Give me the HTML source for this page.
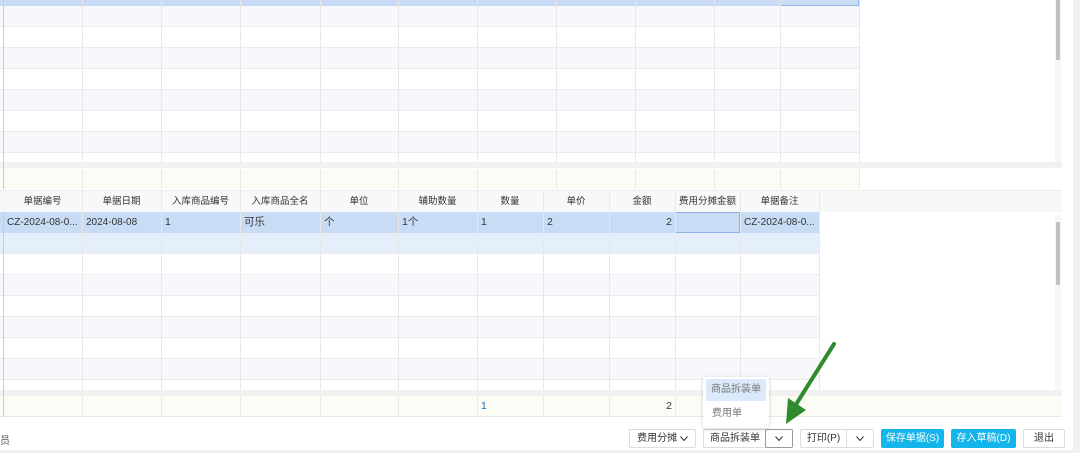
<!DOCTYPE html>
<html><head><meta charset="utf-8"><style>
*{margin:0;padding:0;box-sizing:border-box}
body{width:1080px;height:453px;overflow:hidden;background:#fff;font-family:"Liberation Sans","Noto Sans CJK SC",sans-serif;font-size:10.5px;color:#333;position:relative}
.a{position:absolute}
.row{position:absolute;left:0;height:21px}
.vl{position:absolute;width:1px;background:#e8e8e8}
.c{position:absolute;top:0;height:21px;line-height:21px;white-space:nowrap}
.btn{position:absolute;top:429px;height:19px;border:1px solid #dcdcdc;border-radius:2px;background:#fff;font-size:10px;line-height:17px;text-align:center;color:#333}
.blue{background:#13b5ea;border-color:#13b5ea;color:#fff}
.chev{display:inline-block;width:8px;height:5px;vertical-align:middle}
</style></head><body>
<div class="row" style="top:0;height:6px;width:859px;background:#c9dcf5"></div>
<div class="a" style="left:780px;top:0;width:79px;height:6px;border:1px solid #8fb2e8;border-top:none"></div>
<div class="row" style="top:6px;width:859px;background:#f6f8fc;border-bottom:1px solid #ececec"></div>
<div class="row" style="top:27px;width:859px;background:#fff;border-bottom:1px solid #ececec"></div>
<div class="row" style="top:48px;width:859px;background:#f6f8fc;border-bottom:1px solid #ececec"></div>
<div class="row" style="top:69px;width:859px;background:#fff;border-bottom:1px solid #ececec"></div>
<div class="row" style="top:90px;width:859px;background:#f6f8fc;border-bottom:1px solid #ececec"></div>
<div class="row" style="top:111px;width:859px;background:#fff;border-bottom:1px solid #ececec"></div>
<div class="row" style="top:132px;width:859px;background:#f6f8fc;border-bottom:1px solid #ececec"></div>
<div class="row" style="top:153px;width:859px;height:9px;background:#fff"></div>
<div class="a" style="left:0;top:162px;width:1062px;height:6px;background:#f1f1f1"></div>
<div class="a" style="left:0;top:169px;width:859px;height:20px;background:#fbfcf6"></div>
<div class="a" style="left:1055px;top:0;width:6px;height:162px;background:#f7f7f7"></div>
<div class="a" style="left:1056px;top:0;width:4px;height:60px;background:#c1c1c1"></div>
<div class="a" style="left:1073px;top:0;width:7px;height:453px;background:#eef1f6"></div>
<div class="vl" style="left:3px;top:0;height:189px;background:#ccc"></div>
<div class="vl" style="left:82px;top:0;height:162px"></div><div class="vl" style="left:161px;top:0;height:162px"></div><div class="vl" style="left:240px;top:0;height:162px"></div><div class="vl" style="left:320px;top:0;height:162px"></div><div class="vl" style="left:398px;top:0;height:162px"></div><div class="vl" style="left:477px;top:0;height:162px"></div><div class="vl" style="left:556px;top:0;height:162px"></div><div class="vl" style="left:635px;top:0;height:162px"></div><div class="vl" style="left:714px;top:0;height:162px"></div><div class="vl" style="left:780px;top:0;height:162px"></div><div class="vl" style="left:859px;top:0;height:162px"></div>
<div class="vl" style="left:82px;top:169px;height:20px"></div><div class="vl" style="left:161px;top:169px;height:20px"></div><div class="vl" style="left:240px;top:169px;height:20px"></div><div class="vl" style="left:320px;top:169px;height:20px"></div><div class="vl" style="left:398px;top:169px;height:20px"></div><div class="vl" style="left:477px;top:169px;height:20px"></div><div class="vl" style="left:556px;top:169px;height:20px"></div><div class="vl" style="left:635px;top:169px;height:20px"></div><div class="vl" style="left:714px;top:169px;height:20px"></div><div class="vl" style="left:780px;top:169px;height:20px"></div><div class="vl" style="left:859px;top:169px;height:20px"></div>
<div class="row" style="top:190px;width:1062px;height:22px;background:#f7f8fa;border-top:1px solid #eee;font-size:9.5px">
<div class="c" style="left:3px;width:79px;text-align:center;line-height:22px">单据编号</div>
<div class="c" style="left:82px;width:79px;text-align:center;line-height:22px">单据日期</div>
<div class="c" style="left:161px;width:79px;text-align:center;line-height:22px">入库商品编号</div>
<div class="c" style="left:240px;width:80px;text-align:center;line-height:22px">入库商品全名</div>
<div class="c" style="left:320px;width:78px;text-align:center;line-height:22px">单位</div>
<div class="c" style="left:398px;width:79px;text-align:center;line-height:22px">辅助数量</div>
<div class="c" style="left:477px;width:66px;text-align:center;line-height:22px">数量</div>
<div class="c" style="left:543px;width:66px;text-align:center;line-height:22px">单价</div>
<div class="c" style="left:609px;width:66px;text-align:center;line-height:22px">金额</div>
<div class="c" style="left:675px;width:65px;text-align:center;line-height:22px">费用分摊金额</div>
<div class="c" style="left:740px;width:79px;text-align:center;line-height:22px">单据备注</div>
</div>
<div class="row" style="top:212px;width:819px;background:#c9dcf5">
<div class="c" style="left:7px;font-size:10px">CZ-2024-08-0...</div>
<div class="c" style="left:86px;font-size:10px">2024-08-08</div>
<div class="c" style="left:165px">1</div>
<div class="c" style="left:244px">可乐</div>
<div class="c" style="left:324px">个</div>
<div class="c" style="left:402px">1个</div>
<div class="c" style="left:481px">1</div>
<div class="c" style="left:547px">2</div>
<div class="c" style="left:609px;width:63px;text-align:right">2</div>
<div class="a" style="left:675px;top:0;width:65px;height:21px;border:1px solid #8fb2e8"></div>
<div class="c" style="left:744px;font-size:10px">CZ-2024-08-0...</div>
</div>
<div class="row" style="top:233px;width:819px;background:#e5effb;border-bottom:1px solid #ececec"></div>
<div class="row" style="top:254px;width:819px;background:#fff;border-bottom:1px solid #ececec"></div>
<div class="row" style="top:275px;width:819px;background:#f6f8fc;border-bottom:1px solid #ececec"></div>
<div class="row" style="top:296px;width:819px;background:#fff;border-bottom:1px solid #ececec"></div>
<div class="row" style="top:317px;width:819px;background:#f6f8fc;border-bottom:1px solid #ececec"></div>
<div class="row" style="top:338px;width:819px;background:#fff;border-bottom:1px solid #ececec"></div>
<div class="row" style="top:359px;width:819px;background:#f6f8fc;border-bottom:1px solid #ececec"></div>
<div class="row" style="top:380px;width:819px;height:10px;background:#fff"></div>
<div class="a" style="left:0;top:390px;width:1062px;height:6px;background:#f1f1f1"></div>
<div class="a" style="left:0;top:396px;width:1062px;height:21px;background:#fbfcf6;border-bottom:1px solid #e8e8e8">
<div class="c" style="left:481px;color:#1d6fb8">1</div>
<div class="c" style="left:609px;width:63px;text-align:right">2</div>
</div>
<div class="a" style="left:1055px;top:215px;width:6px;height:175px;background:#f7f7f7"></div>
<div class="a" style="left:1056px;top:222px;width:4px;height:63px;background:#c1c1c1"></div>
<div class="vl" style="left:3px;top:212px;height:205px;background:#ccc"></div>
<div class="vl" style="left:82px;top:190px;height:200px"></div><div class="vl" style="left:161px;top:190px;height:200px"></div><div class="vl" style="left:240px;top:190px;height:200px"></div><div class="vl" style="left:320px;top:190px;height:200px"></div><div class="vl" style="left:398px;top:190px;height:200px"></div><div class="vl" style="left:477px;top:190px;height:200px"></div><div class="vl" style="left:543px;top:190px;height:200px"></div><div class="vl" style="left:609px;top:190px;height:200px"></div><div class="vl" style="left:675px;top:190px;height:200px"></div><div class="vl" style="left:740px;top:190px;height:200px"></div><div class="vl" style="left:819px;top:190px;height:200px"></div>
<div class="vl" style="left:82px;top:396px;height:20px"></div><div class="vl" style="left:161px;top:396px;height:20px"></div><div class="vl" style="left:240px;top:396px;height:20px"></div><div class="vl" style="left:320px;top:396px;height:20px"></div><div class="vl" style="left:398px;top:396px;height:20px"></div><div class="vl" style="left:477px;top:396px;height:20px"></div><div class="vl" style="left:543px;top:396px;height:20px"></div><div class="vl" style="left:609px;top:396px;height:20px"></div><div class="vl" style="left:675px;top:396px;height:20px"></div>
<div class="a" style="left:0;top:432px;font-size:10px;color:#555">员</div>
<div class="a" style="left:0;top:450px;width:1080px;height:3px;background:#eef1f6"></div>
<div class="btn" style="left:629px;width:67px">费用分摊 <svg class="chev" viewBox="0 0 8 5"><path d="M0.5 0.5L4 4.5L7.5 0.5" fill="none" stroke="#333"/></svg></div>
<div class="btn" style="left:703px;width:63px;border-right:none;border-radius:2px 0 0 2px">商品拆装单</div>
<div class="btn" style="left:765px;width:28px;border-color:#999"><svg class="chev" viewBox="0 0 8 5"><path d="M0.5 0.5L4 4.5L7.5 0.5" fill="none" stroke="#333"/></svg></div>
<div class="btn" style="left:800px;width:47px;border-radius:2px 0 0 2px">打印(P)</div>
<div class="btn" style="left:846px;width:28px;border-radius:0 2px 2px 0"><svg class="chev" viewBox="0 0 8 5"><path d="M0.5 0.5L4 4.5L7.5 0.5" fill="none" stroke="#333"/></svg></div>
<div class="btn blue" style="left:881px;width:63px">保存单据(S)</div>
<div class="btn blue" style="left:951px;width:65px">存入草稿(D)</div>
<div class="btn" style="left:1023px;width:42px">退出</div>
<div class="a" style="left:703px;top:377px;width:66px;height:51px;background:#fff;border-radius:3px;box-shadow:0 1px 4px rgba(0,0,0,.18)">
<div class="a" style="left:3px;top:2px;width:60px;height:22px;background:#dbeafb;color:#777;font-size:10px;line-height:22px;text-align:center">商品拆装单</div>
<div class="a" style="left:9px;top:31px;color:#777;font-size:10px;line-height:12px">费用单</div>
</div>
<svg class="a" style="left:780px;top:340px" width="60" height="90"><path d="M54 4 L15 66" stroke="#2e8b2e" stroke-width="4" stroke-linecap="round"/><path d="M6 84 L8 58 L26 70 Z" fill="#2e8b2e"/></svg>
</body></html>
